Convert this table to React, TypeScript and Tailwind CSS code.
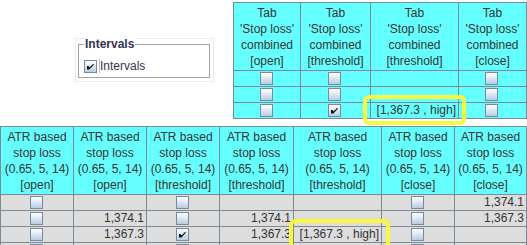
import React from "react";

type Cell =
  | { kind: "cb"; checked?: boolean }
  | { kind: "text"; text: string }
  | null;

const cb = (checked = false): Cell => ({ kind: "cb", checked });
const tx = (text: string): Cell => ({ kind: "text", text });

function Check({ checked }: { checked?: boolean }) {
  return (
    <span className="inline-flex h-[13px] w-[13px] items-center justify-center border border-[#7a8a99] bg-linear-to-b from-[#ffffff] to-[#b9cde3]">
      {checked && (
        <svg width="11" height="11" viewBox="0 0 11 11">
          <path d="M2 5 L2 8.5 L4.5 8.5 L9 3.5 L8 3 L4.5 6.5 L3.5 5 Z" fill="#111" />
        </svg>
      )}
    </span>
  );
}

function Table({
  cols,
  headers,
  rows,
  bodyBg,
}: {
  cols: string;
  headers: string[][];
  rows: Cell[][];
  bodyBg: string;
}) {
  return (
    <div className={`grid border-l border-t border-[#7a8a99] ${cols}`}>
      {headers.map((h, i) => (
        <div
          key={"h" + i}
          className="flex h-[68px] flex-col items-center justify-center border-r border-b border-[#7a8a99] bg-[#66ffff] text-center leading-[16px]"
        >
          {h.map((l, j) => (
            <span key={j} className="whitespace-nowrap">
              {l}
            </span>
          ))}
        </div>
      ))}
      {rows.map((r, ri) =>
        r.map((c, ci) => (
          <div
            key={ri + "-" + ci}
            className={`flex h-[16px] items-center border-r border-b border-[#7a8a99] pr-[2px] ${bodyBg} ${
              c && c.kind === "cb" ? "justify-center" : "justify-end"
            }`}
          >
            {c && c.kind === "cb" && <Check checked={c.checked} />}
            {c && c.kind === "text" && <span className="whitespace-nowrap leading-[15px]">{c.text}</span>}
          </div>
        ))
      )}
    </div>
  );
}

const tabHead = (s: string) => ["Tab", "'Stop loss'", "combined", `[${s}]`];
const atrHead = (s: string) => ["ATR based", "stop loss", "(0.65, 5, 14)", `[${s}]`];

export default function App() {
  const topRows: Cell[][] = [
    [cb(), cb(), null, cb()],
    [cb(), cb(), null, cb()],
    [cb(), cb(true), tx("[1,367.3 , high]"), cb()],
  ];
  const bottomRows: Cell[][] = [
    [cb(), null, cb(), null, null, cb(), tx("1,374.1")],
    [cb(), tx("1,374.1"), cb(), tx("1,374.1"), null, cb(), tx("1,367.3")],
    [cb(), tx("1,367.3"), cb(true), tx("1,367.3"), tx("[1,367.3 , high]"), cb(), null],
    [cb(), null, cb(), null, null, cb(), null],
  ];

  return (
    <div
      className="relative h-[245px] w-[527px] overflow-hidden bg-white text-[12px] text-[#333333]"
      style={{ fontFamily: '"Liberation Sans", Arial, sans-serif' }}
    >
      <div className="flex h-[126px] items-start">
        {/* Intervals group */}
        <div className="ml-[75px] mt-[38px] h-[44px] w-[139px] border border-[#ececec]">
          <div className="relative ml-[2px] mt-[5px] h-[34px] w-[132px] border border-[#a3a3a3]">
            <span className="absolute left-[5px] top-[-9px] bg-white px-[1px] font-bold leading-[16px] text-[#333355]">
              Intervals
            </span>
            <div className="flex items-center pl-[5px] pt-[14px]">
              <Check checked />
              <span className="ml-[2px] h-[14px] w-px bg-[#a8bcd4]" />
              <span className="leading-[14px] text-[#333355]">Intervals</span>
            </div>
          </div>
        </div>

        {/* Tab stop loss table */}
        <div className="ml-[19px] mt-[2px] w-[294px]">
          <Table
            cols="grid-cols-[67px_70px_88px_68px]"
            headers={[tabHead("open"), tabHead("threshold"), tabHead("threshold"), tabHead("close")]}
            rows={topRows}
            bodyBg="bg-[#66ffff]"
          />
        </div>
      </div>

      {/* ATR table */}
      <div className="w-[527px]">
        <Table
          cols="grid-cols-[73px_73px_73px_74px_88px_73px_72px]"
          headers={[
            atrHead("open"),
            atrHead("open"),
            atrHead("threshold"),
            atrHead("threshold"),
            atrHead("threshold"),
            atrHead("close"),
            atrHead("close"),
          ]}
          rows={bottomRows}
          bodyBg="bg-[#dddddd]"
        />
      </div>

      {/* highlight frames */}
      <div className="absolute left-[363px] top-[95px] h-[30px] w-[103px] rounded-[6px] border-[4px] border-[#f8f840]" />
      <div className="absolute left-[289px] top-[219px] h-[30px] w-[101px] rounded-[6px] border-[4px] border-[#f8f840]" />
    </div>
  );
}
